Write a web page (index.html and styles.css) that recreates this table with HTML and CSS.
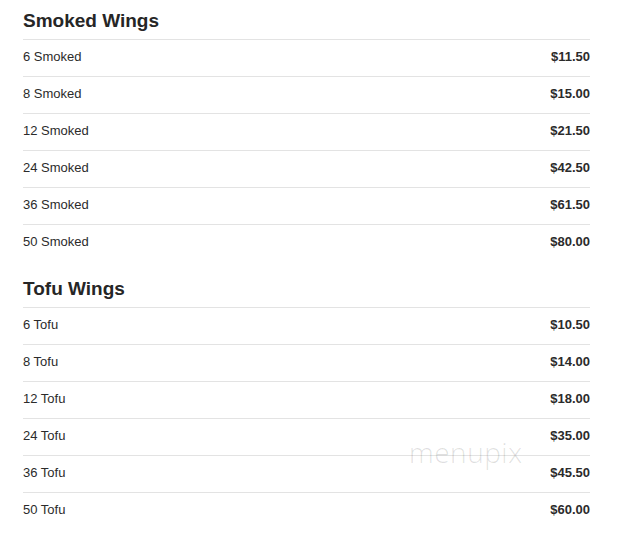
FILE: index.html
```html
<!DOCTYPE html>
<html>
<head>
<meta charset="utf-8">
<link rel="stylesheet" href="styles.css">
</head>
<body>
<div class="menu">
  <section class="section">
    <h2 class="section-title">Smoked Wings</h2>
    <div class="row"><span class="name">6 Smoked</span><span class="price">$11.50</span></div>
    <div class="row"><span class="name">8 Smoked</span><span class="price">$15.00</span></div>
    <div class="row"><span class="name">12 Smoked</span><span class="price">$21.50</span></div>
    <div class="row"><span class="name">24 Smoked</span><span class="price">$42.50</span></div>
    <div class="row"><span class="name">36 Smoked</span><span class="price">$61.50</span></div>
    <div class="row"><span class="name">50 Smoked</span><span class="price">$80.00</span></div>
  </section>
  <section class="section">
    <h2 class="section-title">Tofu Wings</h2>
    <div class="row"><span class="name">6 Tofu</span><span class="price">$10.50</span></div>
    <div class="row"><span class="name">8 Tofu</span><span class="price">$14.00</span></div>
    <div class="row"><span class="name">12 Tofu</span><span class="price">$18.00</span></div>
    <div class="row"><span class="name">24 Tofu</span><span class="price">$35.00</span></div>
    <div class="row"><span class="name">36 Tofu</span><span class="price">$45.50</span></div>
    <div class="row"><span class="name">50 Tofu</span><span class="price">$60.00</span></div>
  </section>
  <div class="watermark">menupix</div>
</div>
</body>
</html>
```
FILE: styles.css
```css
html, body {
  margin: 0;
  padding: 0;
  background: #ffffff;
}
body {
  font-family: "Liberation Sans", Arial, sans-serif;
  color: #333333;
}
.menu {
  position: relative;
  padding: 10px 52px 0 23px;
}
.section + .section {
  margin-top: 17px;
}
.section-title {
  margin: 0;
  padding-bottom: 7px;
  font-size: 19px;
  line-height: 22px;
  font-weight: bold;
  color: #262626;
}
.row {
  display: flex;
  justify-content: space-between;
  align-items: center;
  border-top: 1px solid #e3e3e3;
  padding: 7px 0 9px;
  line-height: 20px;
  font-size: 13px;
}
.name {
  color: #2b2b2b;
}
.price {
  font-weight: bold;
  color: #2b2b2b;
}
.watermark {
  position: absolute;
  left: 409px;
  top: 436px;
  font-family: "Open Sans", sans-serif;
  font-weight: 300;
  font-size: 28px;
  line-height: 32px;
  letter-spacing: 0.5px;
  color: rgba(0, 0, 0, 0.13);
  pointer-events: none;
}
```
